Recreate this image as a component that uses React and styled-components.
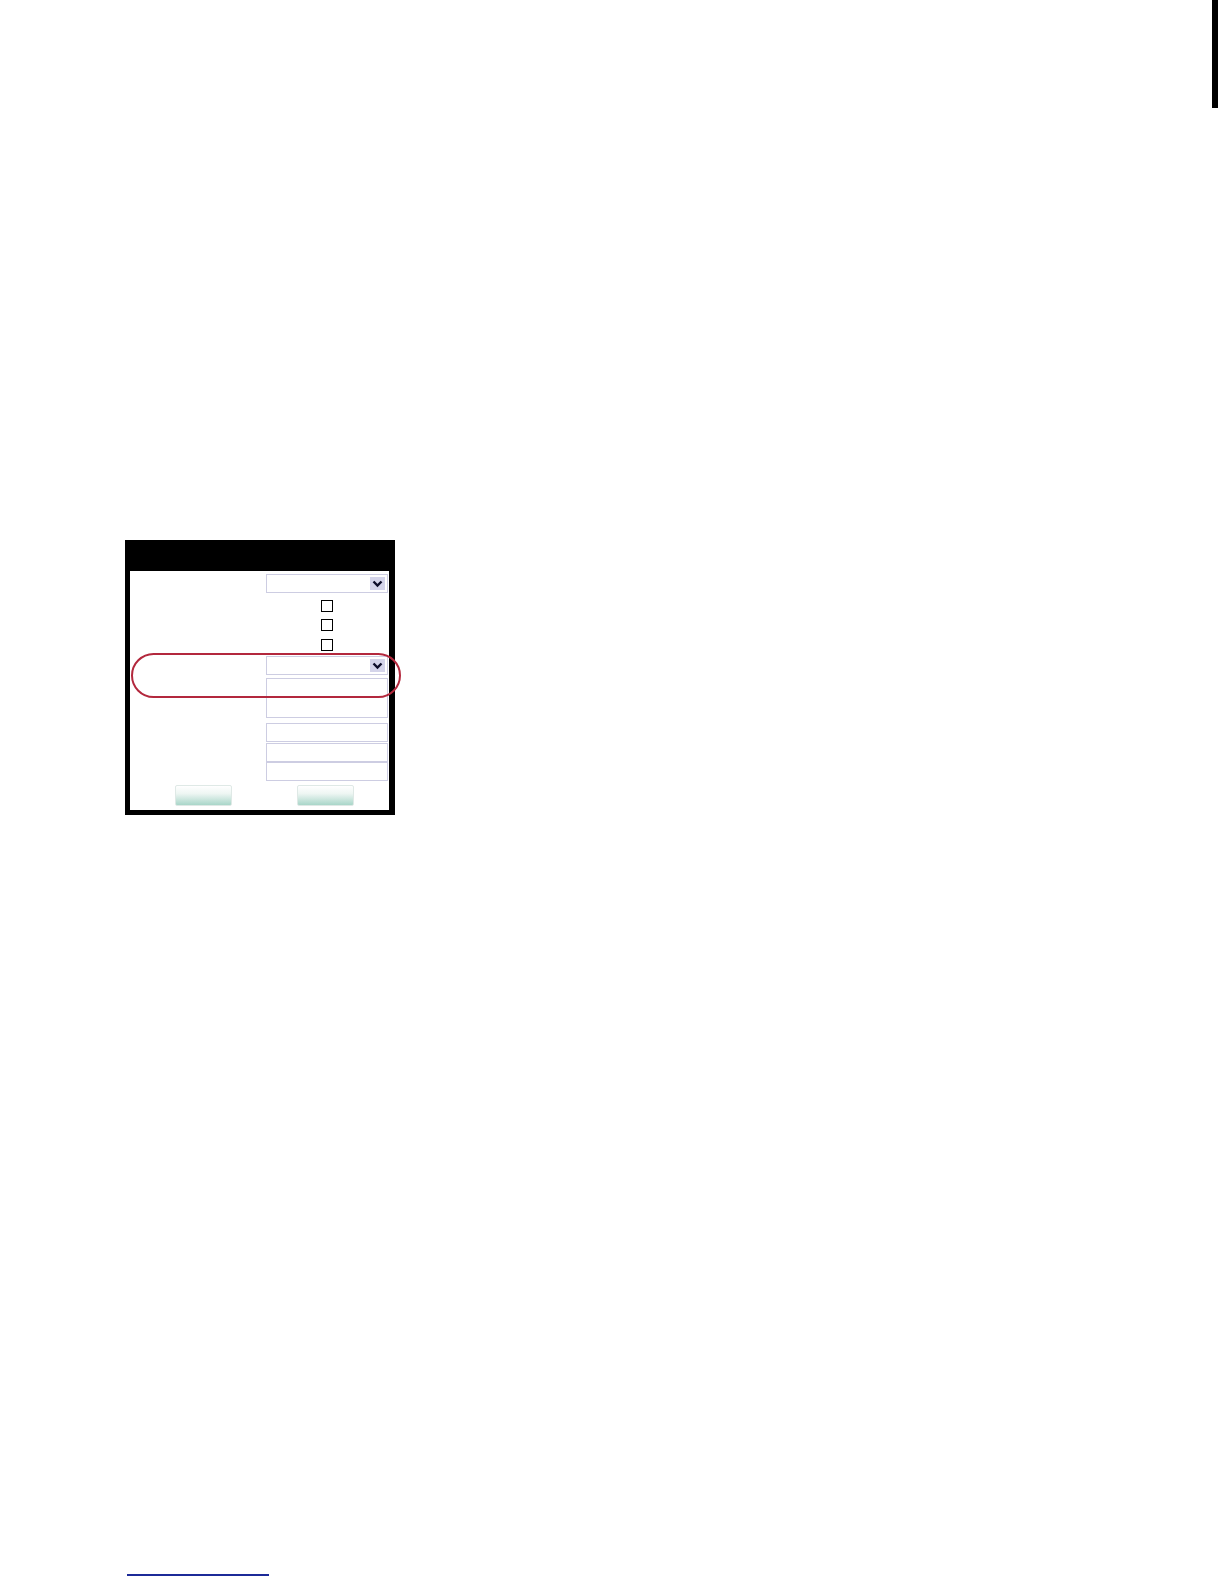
import React from "react";
import styled, { createGlobalStyle } from "styled-components";

const Global = createGlobalStyle`
  html, body { margin: 0; padding: 0; background: #fff; }
  body { font-family: "Liberation Sans", Arial, sans-serif; }
  * { box-sizing: border-box; }
`;

const Page = styled.div`
  width: 1224px;
  height: 1584px;
  background: #fff;
  display: flex;
  flex-direction: column;
`;

const TopStrip = styled.div`
  height: 108px;
  display: flex;
  justify-content: flex-end;
  padding-right: 6px;
`;

const EdgeBar = styled.div`
  width: 6px;
  height: 108px;
  background: #000;
`;

const Panel = styled.div`
  position: relative;
  margin-top: 432px;
  margin-left: 125px;
  width: 270px;
  border: 5px solid #000;
  border-right-width: 6px;
  background: #fff;
`;

const Header = styled.div`
  height: 26px;
  background: #000;
`;

const Body = styled.div`
  display: flex;
  flex-direction: column;
  padding: 3px 1px 4px 0;
`;

const Row = styled.div`
  display: grid;
  grid-template-columns: 136px 122px;
  margin-top: ${(p) => p.$gap || 0}px;
`;

const Label = styled.div``;

const Control = styled.div`
  display: flex;
  justify-content: ${(p) => (p.$center ? "center" : "stretch")};
  align-items: center;
  height: ${(p) => p.$h}px;
`;

const Select = styled.div`
  position: relative;
  width: 122px;
  height: 19px;
  border: 1px solid #cdcde2;
  background: #fff;
`;

const Arrow = styled.div`
  position: absolute;
  right: 2px;
  top: 2px;
  width: 15px;
  height: 13px;
  background: #d4d4ea;
  display: flex;
  align-items: center;
  justify-content: center;
`;

const Field = styled.div`
  width: 122px;
  height: ${(p) => p.$h}px;
  border: 1px solid #cdcde2;
  background: #fff;
`;

const Check = styled.div`
  width: 12px;
  height: 12px;
  border: 1px solid #000;
  background: #fff;
`;

const ButtonRow = styled.div`
  display: flex;
  margin-top: 4px;
  height: 21px;
`;

const Button = styled.div`
  width: 57px;
  height: 21px;
  margin-left: ${(p) => p.$ml}px;
  border: 1px solid #dfe9e6;
  border-radius: 2px;
  background: linear-gradient(#ffffff 0%, #eef6f3 40%, #a9d6c9 100%);
`;

const Highlight = styled.div`
  position: absolute;
  left: 1px;
  top: 108px;
  width: 270px;
  height: 45px;
  border: 2.5px solid #b3283d;
  border-radius: 23px;
  pointer-events: none;
`;

const FootLine = styled.div`
  margin-top: 759px;
  margin-left: 127px;
  width: 142px;
  height: 2px;
  background: #1c2a98;
`;

const Chevron = () => (
  <svg width="11" height="8" viewBox="0 0 11 8">
    <path d="M1.5 1.5 L5.5 5.5 L9.5 1.5" fill="none" stroke="#0d0d2a" strokeWidth="2.4" />
  </svg>
);

const Dropdown = () => (
  <Select>
    <Arrow>
      <Chevron />
    </Arrow>
  </Select>
);

export default function App() {
  return (
    <>
      <Global />
      <Page>
        <TopStrip>
          <EdgeBar />
        </TopStrip>
        <Panel>
          <Header />
          <Body>
            <Row>
              <Label />
              <Control $h={19}><Dropdown /></Control>
            </Row>
            <Row $gap={7}>
              <Label />
              <Control $h={12} $center><Check /></Control>
            </Row>
            <Row $gap={7}>
              <Label />
              <Control $h={12} $center><Check /></Control>
            </Row>
            <Row $gap={8}>
              <Label />
              <Control $h={12} $center><Check /></Control>
            </Row>
            <Row $gap={5}>
              <Label />
              <Control $h={19}><Dropdown /></Control>
            </Row>
            <Row $gap={3}>
              <Label />
              <Control $h={40}><Field $h={40} /></Control>
            </Row>
            <Row $gap={5}>
              <Label />
              <Control $h={19}><Field $h={19} /></Control>
            </Row>
            <Row $gap={1}>
              <Label />
              <Control $h={19}><Field $h={19} /></Control>
            </Row>
            <Row $gap={0}>
              <Label />
              <Control $h={19}><Field $h={19} /></Control>
            </Row>
            <ButtonRow>
              <Button $ml={45} />
              <Button $ml={65} />
            </ButtonRow>
          </Body>
          <Highlight />
        </Panel>
        <FootLine />
      </Page>
    </>
  );
}
